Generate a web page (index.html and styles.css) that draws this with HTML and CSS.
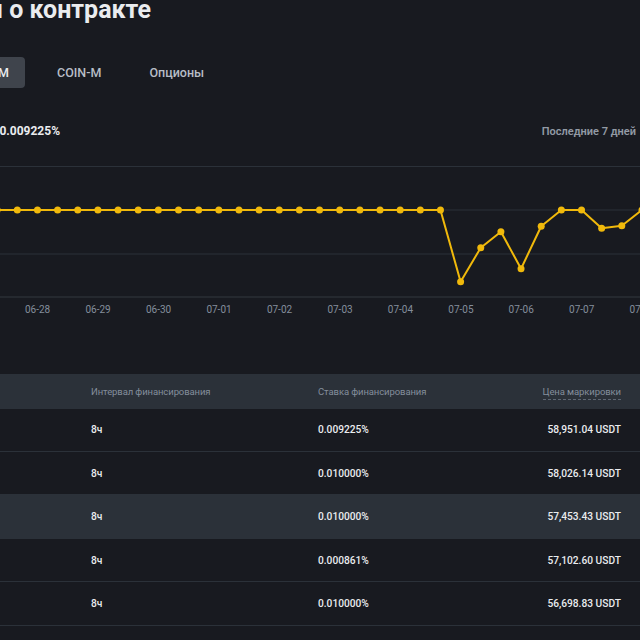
FILE: index.html
```html
<!DOCTYPE html>
<html lang="ru">
<head>
<meta charset="utf-8">
<title>Информация о контракте</title>
<link rel="stylesheet" href="styles.css">
</head>
<body>
<div class="page">
  <h1 class="title">Информация о контракте</h1>

  <div class="tabs">
    <button class="tab active">USDⓈ-M</button>
    <button class="tab">COIN-M</button>
    <button class="tab">Опционы</button>
  </div>

  <section class="chart-card">
    <div class="chart-head">
      <div class="rate"><span class="rate-label">Ставка финансирования</span><span class="rate-value">0.009225%</span></div>
      <div class="range">Последние 7 дней</div>
    </div>
    <svg class="chart" viewBox="-240 0 900 170" width="900" height="170">
      <line class="grid" x1="-240" y1="15.5" x2="660" y2="15.5"/>
      <line class="grid" x1="-240" y1="59" x2="660" y2="59"/>
      <line class="grid" x1="-240" y1="103" x2="660" y2="103"/>
      <line class="axis" x1="-240" y1="146" x2="660" y2="146"/>
      <polyline class="series" points="-240,59 -2.85,59 17.3,59 37.45,59 57.6,59 77.75,59 97.9,59 118.05,59 138.2,59 158.35,59 178.5,59 198.65,59 218.8,59 238.95,59 259.1,59 279.25,59 299.4,59 319.55,59 339.7,59 359.85,59 380,59 400.15,59 420.3,59 440.45,59 460.6,130.7 480.75,96.7 500.9,80.7 521.05,117.7 541.2,75.3 561.35,59 581.5,59 601.65,77.3 621.8,74.7 641.95,59 660,50"/>
      <g class="dots">
        <circle cx="-2.85" cy="59" r="3.5"/>
        <circle cx="17.3" cy="59" r="3.5"/>
        <circle cx="37.45" cy="59" r="3.5"/>
        <circle cx="57.6" cy="59" r="3.5"/>
        <circle cx="77.75" cy="59" r="3.5"/>
        <circle cx="97.9" cy="59" r="3.5"/>
        <circle cx="118.05" cy="59" r="3.5"/>
        <circle cx="138.2" cy="59" r="3.5"/>
        <circle cx="158.35" cy="59" r="3.5"/>
        <circle cx="178.5" cy="59" r="3.5"/>
        <circle cx="198.65" cy="59" r="3.5"/>
        <circle cx="218.8" cy="59" r="3.5"/>
        <circle cx="238.95" cy="59" r="3.5"/>
        <circle cx="259.1" cy="59" r="3.5"/>
        <circle cx="279.25" cy="59" r="3.5"/>
        <circle cx="299.4" cy="59" r="3.5"/>
        <circle cx="319.55" cy="59" r="3.5"/>
        <circle cx="339.7" cy="59" r="3.5"/>
        <circle cx="359.85" cy="59" r="3.5"/>
        <circle cx="380" cy="59" r="3.5"/>
        <circle cx="400.15" cy="59" r="3.5"/>
        <circle cx="420.3" cy="59" r="3.5"/>
        <circle cx="440.45" cy="59" r="3.5"/>
        <circle cx="460.6" cy="130.7" r="3.5"/>
        <circle cx="480.75" cy="96.7" r="3.5"/>
        <circle cx="500.9" cy="80.7" r="3.5"/>
        <circle cx="521.05" cy="117.7" r="3.5"/>
        <circle cx="541.2" cy="75.3" r="3.5"/>
        <circle cx="561.35" cy="59" r="3.5"/>
        <circle cx="581.5" cy="59" r="3.5"/>
        <circle cx="601.65" cy="77.3" r="3.5"/>
        <circle cx="621.8" cy="74.7" r="3.5"/>
        <circle cx="641.95" cy="59" r="3.5"/>
      </g>
      <g class="xlabels">
        <text x="37.6" y="162">06-28</text>
        <text x="98.1" y="162">06-29</text>
        <text x="158.6" y="162">06-30</text>
        <text x="219" y="162">07-01</text>
        <text x="279.5" y="162">07-02</text>
        <text x="340" y="162">07-03</text>
        <text x="400.4" y="162">07-04</text>
        <text x="460.9" y="162">07-05</text>
        <text x="521.2" y="162">07-06</text>
        <text x="581.7" y="162">07-07</text>
        <text x="642.1" y="162">07-08</text>
      </g>
    </svg>
  </section>

  <div class="table">
    <div class="thead">
      <div>Время</div>
      <div>Интервал финансирования</div>
      <div>Ставка финансирования</div>
      <div class="num"><span class="dashed">Цена маркировки</span></div>
    </div>
    <div class="row">
      <div>2024-07-08 08:00:00</div>
      <div>8ч</div>
      <div>0.009225%</div>
      <div class="num">58,951.04 USDT</div>
    </div>
    <div class="row">
      <div>2024-07-08 00:00:00</div>
      <div>8ч</div>
      <div>0.010000%</div>
      <div class="num">58,026.14 USDT</div>
    </div>
    <div class="row hover">
      <div>2024-07-07 16:00:00</div>
      <div>8ч</div>
      <div>0.010000%</div>
      <div class="num">57,453.43 USDT</div>
    </div>
    <div class="row">
      <div>2024-07-07 08:00:00</div>
      <div>8ч</div>
      <div>0.000861%</div>
      <div class="num">57,102.60 USDT</div>
    </div>
    <div class="row">
      <div>2024-07-07 00:00:00</div>
      <div>8ч</div>
      <div>0.010000%</div>
      <div class="num">56,698.83 USDT</div>
    </div>
  </div>
</div>
</body>
</html>
```

FILE: styles.css
```css
html, body {
  margin: 0;
  padding: 0;
}

body {
  background: #181a20;
  color: #eaecef;
  font-family: Roboto, "Noto Sans", sans-serif;
  overflow: hidden;
}

.page {
  width: 900px;
  margin-left: -240px;
}

.title {
  display: flex;
  justify-content: flex-end;
  width: 391px;
  margin: -4px 0 0;
  font-size: 25px;
  line-height: 27px;
  font-weight: 700;
  color: #eaecef;
  white-space: nowrap;
}

.tabs {
  display: grid;
  grid-template-columns: 265px auto auto;
  justify-content: start;
  column-gap: 16px;
  margin-top: 34px;
}

.tab {
  height: 31px;
  padding: 0 16px;
  border: 0;
  border-radius: 4px;
  background: transparent;
  color: #b7bdc6;
  font-family: Roboto, "Noto Sans", sans-serif;
  font-size: 12.5px;
  font-weight: 500;
  line-height: 31px;
  white-space: nowrap;
}

.tab.active {
  justify-self: end;
  background: #3f444c;
  color: #eaecef;
}

.chart-head {
  display: flex;
  justify-content: space-between;
  align-items: baseline;
  margin-top: 35px;
  padding-right: 24px;
  line-height: 16px;
}

.rate {
  width: 300px;
  display: flex;
  justify-content: flex-end;
  gap: 6px;
  white-space: nowrap;
  font-size: 12px;
  font-weight: 700;
}

.rate-label {
  color: #848e9c;
  font-weight: 500;
}

.rate-value {
  color: #eaecef;
}

.range {
  font-size: 11px;
  font-weight: 600;
  color: #929aa5;
}

.chart {
  display: block;
  margin-top: 11px;
  overflow: visible;
}

.grid {
  stroke: #2b3139;
  stroke-width: 1;
}

.axis {
  stroke: #33383f;
  stroke-width: 1;
}

.series {
  fill: none;
  stroke: #f0b90b;
  stroke-width: 2;
  stroke-linejoin: round;
}

.dots circle {
  fill: #f0b90b;
}

.xlabels text {
  fill: #848e9c;
  font-family: Roboto, "Noto Sans", sans-serif;
  font-size: 10px;
  text-anchor: middle;
}

.table {
  margin-top: 52.7px;
}

.thead,
.row {
  display: grid;
  grid-template-columns: 315px 227px 1fr 1fr;
  align-items: center;
  padding: 0 39px 0 16px;
  box-sizing: border-box;
  white-space: nowrap;
}

.thead {
  height: 35px;
  background: #2b3139;
  font-size: 9.5px;
  letter-spacing: -0.1px;
  color: #848e9c;
}

.row {
  height: 43.4px;
  border-bottom: 1px solid #2b3139;
  font-size: 10.2px;
  font-weight: 500;
  color: #eaecef;
}

.row.hover {
  background: #2b3139;
}

.num {
  text-align: right;
}

.dashed {
  padding-bottom: 2px;
  border-bottom: 1px dashed #5e6673;
}
```
